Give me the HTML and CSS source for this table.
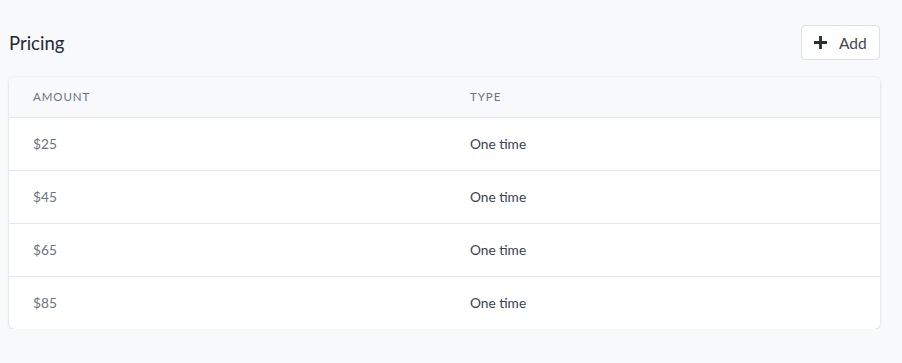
FILE: index.html
```html
<!DOCTYPE html>
<html lang="en">
<head>
<meta charset="utf-8">
<title>Pricing</title>
<link rel="stylesheet" href="styles.css">
</head>
<body>
<section class="pricing">
  <header class="pricing-head">
    <h2 class="pricing-title">Pricing</h2>
    <button class="btn-add" type="button">
      <svg class="btn-icon" width="13" height="13" viewBox="0 0 13 13" aria-hidden="true">
        <path d="M6.5 0v13M0 6.5h13" stroke="currentColor" stroke-width="2.8"/>
      </svg>
      <span>Add</span>
    </button>
  </header>
  <div class="card">
    <div class="row row-head">
      <div class="cell">Amount</div>
      <div class="cell">Type</div>
    </div>
    <div class="row">
      <div class="cell amount">$25</div>
      <div class="cell type">One time</div>
    </div>
    <div class="row">
      <div class="cell amount">$45</div>
      <div class="cell type">One time</div>
    </div>
    <div class="row">
      <div class="cell amount">$65</div>
      <div class="cell type">One time</div>
    </div>
    <div class="row">
      <div class="cell amount">$85</div>
      <div class="cell type">One time</div>
    </div>
  </div>
</section>
</body>
</html>
```
FILE: styles.css
```css
* { box-sizing: border-box; }

body {
  margin: 0;
  background: #f8f9fb;
  font-family: Lato, "Open Sans", Arial, sans-serif;
  color: #1f2937;
}

.pricing {
  width: 871px;
  margin-left: 9px;
  padding-top: 25px;
}

.pricing-head {
  display: flex;
  align-items: center;
  justify-content: space-between;
  height: 35px;
  margin-bottom: 17px;
}

.pricing-title {
  margin: 0;
  font-size: 18.5px;
  font-weight: 400;
  color: #1f2937;
  line-height: 1;
  padding-top: 1px;
}

.btn-add {
  display: flex;
  align-items: center;
  gap: 12px;
  height: 35px;
  width: 79px;
  padding: 0 0 0 12px;
  background: #fff;
  border: 1px solid #dcdfe4;
  border-radius: 4px;
  font-family: inherit;
  font-size: 15.5px;
  color: #3f4650;
}

.btn-icon { color: #2b2f36; flex: none; }

.card {
  background: #fff;
  border-radius: 6px;
  box-shadow: 0 1px 3px rgba(0, 0, 0, 0.12), 0 0 0 1px rgba(0, 0, 0, 0.02);
  overflow: hidden;
}

.row {
  display: grid;
  grid-template-columns: 437px 1fr;
  height: 53px;
  align-items: center;
  border-top: 1px solid #e5e7eb;
}

.row-head {
  height: 40px;
  border-top: 0;
  background: #f8f9fb;
}

.cell {
  padding: 0 24px 2px;
  font-size: 13.7px;
}

.row-head .cell {
  font-size: 11.5px;
  text-transform: uppercase;
  letter-spacing: 0.08em;
  color: #6b7280;
  padding-top: 0;
  padding-bottom: 1px;
}

.amount { color: #6b7280; }
.type { color: #374151; }
```
